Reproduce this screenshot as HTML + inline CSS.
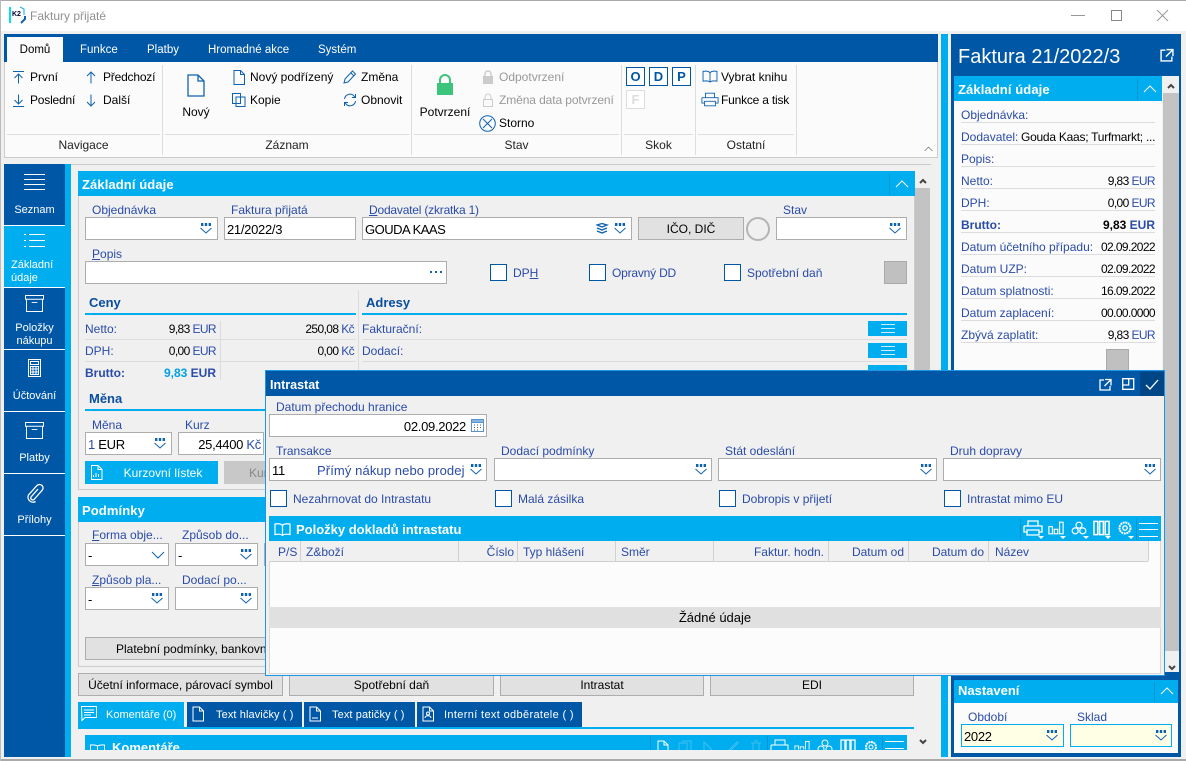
<!DOCTYPE html>
<html><head><meta charset="utf-8"><title>Faktury přijaté</title>
<style>
html,body{margin:0;padding:0;width:1186px;height:761px;overflow:hidden;background:#f0f0f0}
body{position:relative;font-family:"Liberation Sans","DejaVu Sans",sans-serif;font-size:12px;color:#000}
div,svg,span.a{position:absolute;box-sizing:border-box}
.t{white-space:nowrap;line-height:16px;height:16px}
.l{color:#2a4ba8}
.w{color:#fff}
.r{text-align:right}
.c{text-align:center}
.b{font-weight:bold}
.n{letter-spacing:-.6px}
.h{background:#00aeef;color:#fff;font-weight:bold;font-size:14px;line-height:27px;padding-left:4px;height:25px;letter-spacing:.1px}
.i{background:#fff;border:1px solid #adadad;height:23px;line-height:23px;padding-left:2px;white-space:nowrap;font-size:13px;letter-spacing:-.3px}
.btn{background:#e1e1e1;border:1px solid #adadad;height:23px;line-height:23px;text-align:center;white-space:nowrap;overflow:hidden}
.cb{width:17px;height:17px;border:1px solid #0057a6;background:#fff}
.line{background:#dcdcdc;height:1px}
.cy{background:#00aeef}
.bl{background:#0057a6}
svg{fill:none;stroke:#0f62b0;stroke-width:1}
svg.wh{stroke:#fff}
.col{top:541px;height:20px;width:1px;background:#d0d0d0}
.sk{width:19px;height:19px;border:1px solid #0057a6;color:#0057a6;font-weight:bold;font-size:13px;line-height:17px;text-align:center;background:#fff}
.sub{color:#0a4ea0;font-size:13px;font-weight:bold}
.tab{font-size:11.500px}
</style></head><body>
<svg width="0" height="0" style="display:none">
<symbol id="dd" viewBox="0 0 12 11"><rect x="1" y="0" width="2.4" height="3" fill="#0f62b0" stroke="none"/><rect x="4.8" y="0" width="2.4" height="3" fill="#0f62b0" stroke="none"/><rect x="8.6" y="0" width="2.4" height="3" fill="#0f62b0" stroke="none"/><path d="M.5 5l5.500 5 5.500-5"/></symbol>
<symbol id="up" viewBox="0 0 14 8"><path d="M1 7l6-6 6 6"/></symbol>
<symbol id="doc" viewBox="0 0 12 15"><path d="M1 .5h6.500l4 4v10H1zM7.500 .5v4h4"/></symbol>
<symbol id="box" viewBox="0 0 20 18"><path d="M.5.5h19v4H.5zM1.500 4.500v13h17v-13M7 8h6"/></symbol>
<symbol id="printer" viewBox="0 0 20 16"><path d="M5 6V1h10v5M1 6h18v6h-3M4 12H1V6M4 10h12v5H4z"/></symbol>
<symbol id="chart" viewBox="0 0 18 15"><path d="M1 6h4v8H1zM7 9h4v5H7zM13 1h4v13h-4z"/></symbol>
<symbol id="cubes" viewBox="0 0 17 15"><circle cx="8.500" cy="4" r="3.200"/><circle cx="4.500" cy="10" r="3.200"/><circle cx="12.500" cy="10" r="3.200"/></symbol>
<symbol id="cols" viewBox="0 0 18 16"><path d="M1 1h4v14H1zM7 1h4v14H7zM13 1h4v14h-4z"/></symbol>
<symbol id="gear" viewBox="0 0 16 16"><circle cx="8" cy="8" r="5.500" stroke-dasharray="2 .6" stroke-width="2"/><circle cx="8" cy="8" r="2.200"/></symbol>
<symbol id="book" viewBox="0 0 17 14"><path d="M8.500 3C7 1 4 1 1 1.500V12c3-.5 6-.5 7.500 1 1.500-1.500 4.500-1.500 7.500-1V1.500C13 1 10 1 8.500 3zM8.500 3v10"/></symbol>
<symbol id="ext" viewBox="0 0 13 13"><path d="M5 2H1v10h10V8M6 1.500h6v6M12 1.500L5.500 8"/></symbol>
</svg>

<!-- window -->
<div style="left:0;top:0;width:1186px;height:1px;background:#aaa"></div>
<div style="left:0;top:1px;width:1186px;height:30px;background:#fff"></div>
<div style="left:0;top:759px;width:1186px;height:2px;background:#aaa"></div>
<div style="left:0;top:0;width:1px;height:761px;background:#bbb"></div>
<div style="left:9px;top:7px;width:2px;height:16px;background:#00e0f0"></div>
<div class="t b" style="left:12px;top:10px;font-size:7px;line-height:9px;height:9px;color:#003">K2</div>
<svg style="left:20px;top:6px" width="6" height="18"><path d="M0 1l4 2v6" stroke="#00aeef"/><path d="M1 17l4-4v-3" stroke="#0f62b0" stroke-width="2"/></svg>
<div class="t" style="left:30px;top:8px;color:#909090;font-size:12px">Faktury přijaté</div>
<div style="left:1071px;top:15px;width:14px;height:1px;background:#999"></div>
<div style="left:1111px;top:10px;width:11px;height:11px;border:1px solid #888"></div>
<svg style="left:1156px;top:9px" width="13" height="13"><path d="M1 1l11 11M12 1L1 12" stroke="#999"/></svg>

<!-- ribbon -->
<div class="bl" style="left:4px;top:34px;width:934px;height:28px"></div>
<div style="left:7px;top:37px;width:56px;height:25px;background:#fbfbfb"></div>
<div class="t c tab" style="left:7px;top:42px;width:56px">Domů</div>
<div class="t w tab" style="left:80px;top:42px">Funkce</div>
<div class="t w tab" style="left:147px;top:42px">Platby</div>
<div class="t w tab" style="left:208px;top:42px">Hromadné akce</div>
<div class="t w tab" style="left:318px;top:42px">Systém</div>
<div style="left:4px;top:62px;width:934px;height:96px;background:#fbfbfb;border:1px solid #ccc;border-top:0"></div>
<div style="left:7px;top:134px;width:153px;height:1px;background:#ddd"></div>
<div style="left:165px;top:134px;width:244px;height:1px;background:#ddd"></div>
<div style="left:414px;top:134px;width:205px;height:1px;background:#ddd"></div>
<div style="left:624px;top:134px;width:69px;height:1px;background:#ddd"></div>
<div style="left:698px;top:134px;width:96px;height:1px;background:#ddd"></div>
<div style="left:162px;top:65px;width:1px;height:90px;background:#ddd"></div>
<div style="left:411px;top:65px;width:1px;height:90px;background:#ddd"></div>
<div style="left:621px;top:65px;width:1px;height:90px;background:#ddd"></div>
<div style="left:695px;top:65px;width:1px;height:90px;background:#ddd"></div>
<div style="left:796px;top:65px;width:1px;height:90px;background:#ddd"></div>
<div class="t c" style="left:7px;top:137px;width:153px;color:#222">Navigace</div>
<div class="t c" style="left:165px;top:137px;width:244px;color:#222">Záznam</div>
<div class="t c" style="left:414px;top:137px;width:205px;color:#222">Stav</div>
<div class="t c" style="left:624px;top:137px;width:69px;color:#222">Skok</div>
<div class="t c" style="left:698px;top:137px;width:96px;color:#222">Ostatní</div>
<svg style="left:13px;top:71px" width="12" height="13"><path d="M0 .5h11M5.500 12.500V3M1.500 7l4-4 4 4"/></svg>
<div class="t" style="left:30px;top:69px">První</div>
<svg style="left:13px;top:94px" width="12" height="13"><path d="M0 12.500h11M5.500 .5V10M1.500 6l4 4 4-4"/></svg>
<div class="t" style="left:30px;top:92px;letter-spacing:-.2px">Poslední</div>
<svg style="left:86px;top:71px" width="10" height="13"><path d="M5 12.500V1M1 5l4-4 4 4"/></svg>
<div class="t" style="left:103px;top:69px;letter-spacing:-.2px">Předchozí</div>
<svg style="left:86px;top:94px" width="10" height="13"><path d="M5 .5V12M1 8l4 4 4-4"/></svg>
<div class="t" style="left:103px;top:92px">Další</div>
<svg style="left:187px;top:74px;stroke-width:1.300" width="18" height="23"><path d="M1 1h10l6 6v15H1zM11 1v6h6"/></svg>
<div class="t c" style="left:166px;top:104px;width:60px">Nový</div>
<svg style="left:233px;top:70px" width="12" height="15"><use href="#doc"/></svg>
<div class="t" style="left:250px;top:69px">Nový podřízený</div>
<svg style="left:232px;top:93px" width="14" height="14"><path d="M.5.5h8v10h-8zM4 4h9v9.500H4z"/></svg>
<div class="t" style="left:250px;top:92px">Kopie</div>
<svg style="left:343px;top:70px" width="14" height="14"><path d="M1 13l1-4 7.500-8 3 3L5 12zM8 3l3 3"/></svg>
<div class="t" style="left:361px;top:69px">Změna</div>
<svg style="left:343px;top:93px" width="14" height="14"><path d="M1.500 6A5.500 5.500 0 0 1 11 3l1.500 1.500M12.500 1v3.500H9M12.500 8A5.500 5.500 0 0 1 3 11L1.500 9.500M1.500 13V9.500H5"/></svg>
<div class="t" style="left:361px;top:92px">Obnovit</div>
<svg style="left:436px;top:74px" width="18" height="22"><path d="M4 10V6a5 5 0 0 1 10 0v4" stroke="#3cc47c" stroke-width="2"/><rect x="1" y="9" width="16" height="12" fill="#3cc47c" stroke="none"/></svg>
<div class="t c" style="left:415px;top:104px;width:60px">Potvrzení</div>
<svg style="left:482px;top:70px" width="12" height="14"><path d="M3 7V4a3 3 0 0 1 6 0v3" stroke="#ccc" stroke-width="1.500"/><rect x="1" y="6" width="10" height="8" fill="#ccc" stroke="none"/></svg>
<div class="t" style="left:499px;top:69px;color:#999">Odpotvrzení</div>
<svg style="left:482px;top:93px" width="12" height="14"><path d="M3 7V4a3 3 0 0 1 6 0v3M1.500 6.500h9v7h-9z" stroke="#ccc"/></svg>
<div class="t" style="left:499px;top:92px;color:#999;letter-spacing:-.1px">Změna data potvrzení</div>
<svg style="left:479px;top:115px" width="17" height="17"><circle cx="8.500" cy="8.500" r="7.800"/><path d="M4 4l9 9M13 4l-9 9"/></svg>
<div class="t" style="left:499px;top:115px">Storno</div>
<div class="sk" style="left:626px;top:67px">O</div>
<div class="sk" style="left:649px;top:67px">D</div>
<div class="sk" style="left:672px;top:67px">P</div>
<div class="sk" style="left:626px;top:90px;border-color:#ddd;color:#ddd">F</div>
<svg style="left:702px;top:70px" width="16" height="13"><use href="#book"/></svg>
<div class="t" style="left:721px;top:69px">Vybrat knihu</div>
<svg style="left:701px;top:92px" width="18" height="15"><use href="#printer"/></svg>
<div class="t" style="left:721px;top:92px;letter-spacing:-.2px">Funkce a tisk</div>
<svg style="left:924px;top:146px;stroke:#555" width="9" height="6"><use href="#up"/></svg>

<!-- cyan strip & right panel -->
<div class="cy" style="left:941px;top:34px;width:7px;height:723px"></div>
<div class="bl" style="left:951px;top:34px;width:230px;height:723px"></div>
<div class="t w" style="left:958px;top:45px;font-size:20px;line-height:24px;height:24px">Faktura 21/2022/3</div>
<svg class="wh" style="left:1160px;top:48px;stroke-width:1.300" width="14" height="14"><use href="#ext"/></svg>
<div style="left:954px;top:76px;width:208px;height:604px;background:#fbfbfb"></div>
<div class="h" style="left:954px;top:76px;width:208px;font-size:13px">Základní údaje</div>
<div style="left:1137px;top:79px;width:1px;height:21px;background:#0a95d0"></div>
<svg class="wh" style="left:1143px;top:85px" width="14" height="8"><use href="#up"/></svg>
<div style="left:1162px;top:76px;width:17px;height:604px;background:#f0f0f0"></div>
<div style="left:1163px;top:93px;width:16px;height:558px;background:#c3c3c3"></div>
<svg style="left:1167px;top:83px;stroke:#444;stroke-width:2" width="8" height="6"><path d="M1 5l3-3 3 3"/></svg>

<div class="t l" style="left:961px;top:107px">Objednávka:</div><div class="line" style="left:961px;top:122px;width:194px"></div>
<div class="t l" style="left:961px;top:129px">Dodavatel:</div><div class="t" style="left:1021px;top:129px;width:134px;overflow:hidden;letter-spacing:-.25px">Gouda Kaas; Turfmarkt; ...</div><div class="line" style="left:961px;top:144px;width:194px"></div>
<div class="t l" style="left:961px;top:151px">Popis:</div><div class="line" style="left:961px;top:166px;width:194px"></div>
<div class="t l" style="left:961px;top:173px">Netto:</div><div class="t r n" style="left:1055px;top:173px;width:100px">9,83 <span class="l">EUR</span></div><div class="line" style="left:961px;top:188px;width:194px"></div>
<div class="t l" style="left:961px;top:195px">DPH:</div><div class="t r n" style="left:1055px;top:195px;width:100px">0,00 <span class="l">EUR</span></div><div class="line" style="left:961px;top:210px;width:194px"></div>
<div class="t l b" style="left:961px;top:217px">Brutto:</div><div class="t r b" style="left:1055px;top:217px;width:100px">9,83 <span class="l">EUR</span></div><div class="line" style="left:961px;top:232px;width:194px"></div>
<div class="t l" style="left:961px;top:239px">Datum účetního případu:</div><div class="t r n" style="left:1055px;top:239px;width:100px">02.09.2022</div><div class="line" style="left:961px;top:254px;width:194px"></div>
<div class="t l" style="left:961px;top:261px">Datum UZP:</div><div class="t r n" style="left:1055px;top:261px;width:100px">02.09.2022</div><div class="line" style="left:961px;top:276px;width:194px"></div>
<div class="t l" style="left:961px;top:283px">Datum splatnosti:</div><div class="t r n" style="left:1055px;top:283px;width:100px">16.09.2022</div><div class="line" style="left:961px;top:298px;width:194px"></div>
<div class="t l" style="left:961px;top:305px">Datum zaplacení:</div><div class="t r n" style="left:1055px;top:305px;width:100px">00.00.0000</div><div class="line" style="left:961px;top:320px;width:194px"></div>
<div class="t l" style="left:961px;top:327px">Zbývá zaplatit:</div><div class="t r n" style="left:1055px;top:327px;width:100px">9,83 <span class="l">EUR</span></div><div class="line" style="left:961px;top:342px;width:194px"></div>
<div style="left:1106px;top:349px;width:23px;height:23px;background:#c0c0c0;border:1px solid #aaa"></div>

<!-- Nastavení -->
<div class="bl" style="left:951px;top:672px;width:230px;height:10px"></div>
<div class="cy" style="left:954px;top:680px;width:224px;height:23px"></div>
<div class="t w b" style="left:958px;top:683px;font-size:13px">Nastavení</div>
<div style="left:1154px;top:682px;width:1px;height:20px;background:#0a95d0"></div>
<svg class="wh" style="left:1160px;top:687px" width="14" height="8"><use href="#up"/></svg>
<div style="left:954px;top:703px;width:224px;height:50px;background:#fbfbfb"></div>
<div class="t l" style="left:968px;top:709px">Období</div>
<div class="t l" style="left:1077px;top:709px">Sklad</div>
<div class="i" style="left:961px;top:724px;width:103px;background:#ffffe6;border-color:#00aeef">2022</div>
<div class="i" style="left:1070px;top:724px;width:102px;background:#ffffe6;border-color:#00aeef"></div>
<svg style="left:1046px;top:730px" width="12" height="11"><use href="#dd"/></svg>
<svg style="left:1155px;top:730px" width="12" height="11"><use href="#dd"/></svg>

<!-- sidebar -->
<div class="bl" style="left:4px;top:164px;width:61px;height:593px"></div>
<div class="cy" style="left:65px;top:164px;width:6px;height:593px"></div>
<div class="cy" style="left:4px;top:226px;width:61px;height:61px"></div>
<div style="left:4px;top:225px;width:61px;height:1px;background:#fff"></div>
<div style="left:4px;top:287px;width:61px;height:1px;background:#fff"></div>
<div style="left:4px;top:349px;width:61px;height:1px;background:#fff"></div>
<div style="left:4px;top:411px;width:61px;height:1px;background:#fff"></div>
<div style="left:4px;top:473px;width:61px;height:1px;background:#fff"></div>
<div style="left:4px;top:535px;width:61px;height:1px;background:#fff"></div>
<svg class="wh" style="left:24px;top:174px" width="21" height="17"><path d="M0 .5h21M0 5.500h21M0 10.500h21M0 15.500h21"/></svg>
<div class="t w c" style="left:4px;top:202px;width:61px;font-size:11px">Seznam</div>
<svg class="wh" style="left:24px;top:233px" width="21" height="15"><path d="M5 1.500h16M5 7.500h16M5 13.500h16M0 1.500h2M0 7.500h2M0 13.500h2"/></svg>
<div class="t w" style="left:11px;top:258px;font-size:11px;height:14px;line-height:14px">Základní</div>
<div class="t w" style="left:11px;top:271px;font-size:11px;height:14px;line-height:14px">údaje</div>
<svg class="wh" style="left:25px;top:295px" width="19" height="17"><use href="#box"/></svg>
<div class="t w c" style="left:4px;top:321px;width:61px;font-size:11px;height:14px;line-height:14px">Položky</div>
<div class="t w c" style="left:4px;top:334px;width:61px;font-size:11px;height:14px;line-height:14px">nákupu</div>
<svg class="wh" style="left:28px;top:359px" width="13" height="18"><path d="M.5.500h12v17H.5zM2.500 2.500h8v3h-8zM2.500 7.500h8v8h-8zM5 7.500v8M8 7.500v8M2.500 10h8M2.500 13h8"/></svg>
<div class="t w c" style="left:4px;top:388px;width:61px;font-size:11px">Účtování</div>
<svg class="wh" style="left:25px;top:422px" width="19" height="17"><use href="#box"/></svg>
<div class="t w c" style="left:4px;top:450px;width:61px;font-size:11px">Platby</div>
<svg class="wh" style="left:25px;top:483px;stroke-width:1.300" width="19" height="20"><path d="M13 6l-7 8a2 2 0 0 0 3 2.500l8-9a3.500 3.500 0 0 0-5-5l-8.500 9.500a5 5 0 0 0 7 6.500"/></svg>
<div class="t w c" style="left:4px;top:512px;width:61px;font-size:11px">Přílohy</div>

<!-- main -->
<div style="left:71px;top:164px;width:860px;height:1px;background:#ccc"></div>
<div style="left:78px;top:196px;width:837px;height:294px;border:1px solid #ccc;border-top:0"></div>
<div class="h" style="left:78px;top:171px;width:837px;font-size:13px">Základní údaje</div>
<div style="left:889px;top:174px;width:1px;height:21px;background:#0a95d0"></div>
<svg class="wh" style="left:895px;top:180px" width="14" height="8"><use href="#up"/></svg>
<div style="left:915px;top:188px;width:15px;height:480px;background:#c3c3c3"></div>
<svg style="left:919px;top:178px;stroke:#444;stroke-width:2" width="8" height="6"><path d="M1 5l3-3 3 3"/></svg>
<svg style="left:919px;top:739px;stroke:#444;stroke-width:2" width="8" height="6"><path d="M1 1l3 3 3-3"/></svg>

<div class="t l" style="left:92px;top:202px">Objednávka</div>
<div class="i" style="left:85px;top:217px;width:133px"></div>
<svg style="left:200px;top:223px" width="12" height="11"><use href="#dd"/></svg>
<div class="t l" style="left:231px;top:202px">Faktura přijatá</div>
<div class="i" style="left:224px;top:217px;width:132px">21/2022/3</div>
<div class="t l" style="left:369px;top:202px;letter-spacing:-.2px"><u>D</u>odavatel (zkratka 1)</div>
<div class="i" style="left:362px;top:217px;width:270px;letter-spacing:-.5px">GOUDA KAAS</div>
<svg style="left:596px;top:223px" width="13" height="13"><path d="M1 2l5-1.500 5 1.500-5 2zM1 5l5 2 5-2M1 8l5 2 5-2" stroke-width="1.300"/></svg>
<svg style="left:614px;top:223px" width="12" height="11"><use href="#dd"/></svg>
<div class="btn" style="left:638px;top:217px;width:106px">IČO, DIČ</div>
<div style="left:746px;top:217px;width:24px;height:24px;border:2px solid #b4b4b4;border-radius:50%"></div>
<div class="t l" style="left:783px;top:202px">Stav</div>
<div class="i" style="left:776px;top:217px;width:131px"></div>
<svg style="left:889px;top:223px" width="12" height="11"><use href="#dd"/></svg>

<div class="t l" style="left:92px;top:246px"><u>P</u>opis</div>
<div class="i" style="left:85px;top:261px;width:362px"></div>
<svg style="left:429px;top:270px;stroke:none;fill:#0f62b0" width="14" height="4"><rect x="1" y="1" width="2" height="2"/><rect x="6" y="1" width="2" height="2"/><rect x="11" y="1" width="2" height="2"/></svg>
<div class="cb" style="left:490px;top:264px"></div><div class="t l" style="left:513px;top:265px">DP<u>H</u></div>
<div class="cb" style="left:589px;top:264px"></div><div class="t l" style="left:612px;top:265px;letter-spacing:-.2px">Opravný DD</div>
<div class="cb" style="left:724px;top:264px"></div><div class="t l" style="left:747px;top:265px">Spotřební daň</div>
<div style="left:884px;top:261px;width:23px;height:23px;background:#c0c0c0;border:1px solid #aaa"></div>

<div class="t sub" style="left:89px;top:295px">Ceny</div>
<div class="cy" style="left:85px;top:313px;width:271px;height:2px"></div>
<div style="left:358px;top:290px;width:1px;height:90px;background:#dcdcdc"></div>
<div class="t sub" style="left:366px;top:295px">Adresy</div>
<div class="cy" style="left:362px;top:313px;width:545px;height:2px"></div>

<div class="t l" style="left:85px;top:321px">Netto:</div><div class="t r n" style="left:116px;top:321px;width:100px">9,83 <span class="l">EUR</span></div><div class="t r n" style="left:254px;top:321px;width:100px">250,08 <span class="l">Kč</span></div>
<div class="line" style="left:85px;top:339px;width:271px"></div>
<div class="t l" style="left:85px;top:343px">DPH:</div><div class="t r n" style="left:116px;top:343px;width:100px">0,00 <span class="l">EUR</span></div><div class="t r n" style="left:254px;top:343px;width:100px">0,00 <span class="l">Kč</span></div>
<div class="line" style="left:85px;top:361px;width:271px"></div>
<div class="t l b" style="left:85px;top:365px">Brutto:</div><div class="t r b" style="left:116px;top:365px;width:100px"><span style="color:#00a0e8">9,83</span> <span class="l">EUR</span></div>
<div style="left:220px;top:321px;width:1px;height:59px;background:#dcdcdc"></div>

<div class="t l" style="left:362px;top:321px">Fakturační:</div>
<div class="cy" style="left:868px;top:321px;width:39px;height:15px"></div>
<svg class="wh" style="left:881px;top:324px;stroke:#cceeff" width="14" height="9"><path d="M0 .5h14M0 4.500h14M0 8.500h14"/></svg>
<div class="line" style="left:362px;top:339px;width:545px"></div>
<div class="t l" style="left:362px;top:343px">Dodací:</div>
<div class="cy" style="left:868px;top:343px;width:39px;height:15px"></div>
<svg class="wh" style="left:881px;top:346px;stroke:#cceeff" width="14" height="9"><path d="M0 .5h14M0 4.500h14M0 8.500h14"/></svg>
<div class="line" style="left:362px;top:361px;width:545px"></div>
<div class="cy" style="left:868px;top:365px;width:39px;height:6px"></div>

<div class="t sub" style="left:89px;top:391px">Měna</div>
<div class="cy" style="left:85px;top:409px;width:180px;height:2px"></div>
<div class="t l" style="left:92px;top:417px">Měna</div>
<div class="i" style="left:85px;top:432px;width:87px"><span class="l">1</span> EUR</div>
<svg style="left:154px;top:438px" width="12" height="11"><use href="#dd"/></svg>
<div class="t l" style="left:185px;top:417px">Kurz</div>
<div class="i r" style="left:178px;top:432px;width:86px;padding-right:2px;padding-left:0">25,4400 <span class="l">Kč</span></div>
<div class="cy" style="left:85px;top:461px;width:133px;height:23px"></div>
<svg class="wh" style="left:90px;top:465px" width="13" height="15"><use href="#doc"/><path d="M3.500 12v-2M6 12V8M8.500 12v-3" stroke="#fff"/></svg>
<div class="t w c" style="left:108px;top:465px;width:110px">Kurzovní lístek</div>
<div style="left:224px;top:461px;width:45px;height:23px;background:#c8c8c8"></div>
<div class="t" style="left:249px;top:465px;color:#888">Kur</div>

<div style="left:78px;top:522px;width:837px;height:145px;border:1px solid #ccc;border-top:0"></div>
<div class="h" style="left:78px;top:497px;width:837px;font-size:13px">Podmínky</div>
<div class="t l" style="left:92px;top:527px"><u>F</u>orma obje...</div>
<div class="i" style="left:85px;top:543px;width:84px">-</div>
<svg style="left:151px;top:551px" width="14" height="8"><path d="M1 1l6 6 6-6"/></svg>
<div class="t l" style="left:182px;top:527px">Způsob do...</div>
<div class="i" style="left:175px;top:543px;width:83px">-</div>
<svg style="left:240px;top:549px" width="12" height="11"><use href="#dd"/></svg>
<div style="left:264px;top:543px;width:4px;height:23px;background:#fff;border:1px solid #adadad"></div>
<div class="t l" style="left:92px;top:572px"><u>Z</u>působ pla...</div>
<div class="i" style="left:85px;top:587px;width:84px">-</div>
<svg style="left:151px;top:593px" width="12" height="11"><use href="#dd"/></svg>
<div class="t l" style="left:182px;top:572px">Dodací po...</div>
<div class="i" style="left:175px;top:587px;width:83px"></div>
<svg style="left:240px;top:593px" width="12" height="11"><use href="#dd"/></svg>
<div class="btn" style="left:85px;top:637px;width:400px;text-align:left"><span style="padding-left:30px">Platební podmínky, bankovní spojení</span></div>

<div class="btn" style="left:78px;top:673px;width:205px">Účetní informace, párovací symbol</div>
<div class="btn" style="left:289px;top:673px;width:205px">Spotřební daň</div>
<div class="btn" style="left:500px;top:673px;width:204px">Intrastat</div>
<div class="btn" style="left:710px;top:673px;width:204px">EDI</div>

<div class="cy" style="left:78px;top:702px;width:106px;height:27px"></div>
<svg class="wh" style="left:81px;top:706px" width="17" height="16"><path d="M.5.500h15v11H4l-3 3zM3 4h10M3 6.500h10M3 9h7"/></svg>
<div class="t w" style="left:106px;top:707px;font-size:11px">Komentáře (0)</div>
<div class="bl" style="left:187px;top:702px;width:115px;height:25px"></div>
<svg class="wh" style="left:192px;top:706px" width="12" height="16"><use href="#doc"/></svg>
<div class="t w" style="left:216px;top:707px;font-size:11px;letter-spacing:.1px">Text hlavičky (&nbsp;)</div>
<div class="bl" style="left:304px;top:702px;width:111px;height:25px"></div>
<svg class="wh" style="left:309px;top:706px" width="12" height="16"><use href="#doc"/><path d="M3 12h6"/></svg>
<div class="t w" style="left:332px;top:707px;font-size:11px;letter-spacing:.1px">Text patičky (&nbsp;)</div>
<div class="bl" style="left:417px;top:702px;width:165px;height:25px"></div>
<svg class="wh" style="left:422px;top:706px" width="12" height="16"><use href="#doc"/><circle cx="6" cy="7.500" r="1.500"/><path d="M3 12c0-3 6-3 6 0"/></svg>
<div class="t w" style="left:444px;top:707px;font-size:11px;letter-spacing:.35px">Interní text odběratele (&nbsp;)</div>
<div class="cy" style="left:78px;top:727px;width:836px;height:2px"></div>

<div class="cy" style="left:85px;top:735px;width:822px;height:15px;overflow:hidden"></div>
<svg class="wh" style="left:90px;top:744px" width="15" height="6" viewBox="0 0 15 6"><path d="M.5 6V1c3-.5 5 0 7 1 2-1 4-1.500 7-1v5M7.500 2v4"/></svg>
<div style="left:112px;top:740px;width:80px;height:10px;overflow:hidden"><div class="t w b" style="left:0;top:0;font-size:13px;height:16px">Komentáře</div></div>
<div style="left:650px;top:736px;width:1px;height:14px;background:#0a95d0"></div>
<svg class="wh" style="left:657px;top:740px" width="12" height="10"><path d="M1 13V1h6l4 4v8M7 1v4h4"/></svg>
<svg style="left:678px;top:740px;stroke:#40bff0" width="14" height="10"><path d="M1 3h8v10M1 3v10M5 3V1h8v12"/></svg>
<svg style="left:703px;top:741px;stroke:#40bff0" width="11" height="9"><path d="M1 9V1l8 8"/></svg>
<svg style="left:727px;top:740px;stroke:#40bff0" width="13" height="10"><path d="M1 11l9-9 1 1-8 8"/></svg>
<svg style="left:750px;top:740px;stroke:#40bff0" width="12" height="10"><path d="M1 3h10M3 3v9M9 3v9M4 1h4"/></svg>
<div style="left:767px;top:736px;width:1px;height:14px;background:#0a95d0"></div>
<svg class="wh" style="left:770px;top:739px" width="19" height="11"><path d="M5 6V1h10v5M1 6h17v7M1 13V6"/></svg>
<svg class="wh" style="left:794px;top:740px" width="16" height="10" viewBox="0 0 18 10"><path d="M1 10V6h4v4M7 10V7h4v3M13 10V1h4v9"/></svg>
<svg class="wh" style="left:817px;top:739px" width="16" height="11" viewBox="0 0 16 11"><circle cx="8" cy="4" r="3"/><circle cx="4" cy="10" r="3"/><circle cx="12" cy="10" r="3"/></svg>
<svg class="wh" style="left:840px;top:739px;stroke-width:1.300" width="16" height="11" viewBox="0 0 16 11"><path d="M1 13V1h4v12M6 13V1h4v12M11 13V1h4v12"/></svg>
<svg class="wh" style="left:864px;top:740px" width="14" height="10"><circle cx="7" cy="7" r="5" stroke-dasharray="2 .6" stroke-width="2"/><circle cx="7" cy="7" r="2"/></svg>
<div style="left:882px;top:736px;width:1px;height:14px;background:#0a95d0"></div>
<svg class="wh" style="left:885px;top:740px" width="19" height="10"><path d="M0 1.500h19M0 8.500h19"/></svg>

<!-- dialog -->
<div style="left:265px;top:370px;width:900px;height:306px;background:#f0f0f0;border:1px solid #1e96e6"></div>
<div class="bl" style="left:266px;top:371px;width:898px;height:25px"></div>
<div class="t w b" style="left:270px;top:377px;font-size:12.500px">Intrastat</div>
<div style="left:1140px;top:372px;width:24px;height:24px;background:#004687"></div>
<svg class="wh" style="left:1099px;top:378px;stroke-width:1.300" width="13" height="13"><use href="#ext"/></svg>
<svg class="wh" style="left:1122px;top:378px;stroke-width:1.300" width="13" height="12"><path d="M.7.700h11v10.600H.7zM.7 7h6V.7"/></svg>
<svg class="wh" style="left:1145px;top:379px;stroke-width:1.300" width="14" height="11"><path d="M1 6l4 4 8-9"/></svg>

<div class="t l" style="left:276px;top:399px">Datum přechodu hranice</div>
<div class="i r" style="left:269px;top:414px;width:218px;padding-right:20px">02.09.2022</div>
<svg style="left:471px;top:418px" width="13" height="14"><path d="M.5 1.500h12v12H.5z" stroke="#5a94d0"/><path d="M.5 1.500h12v3H.5z" fill="#8ab4e0" stroke="#5a94d0"/><path d="M3 7h1M6 7h1M9 7h1M3 9.500h1M6 9.500h1M9 9.500h1M3 12h1M6 12h1" stroke="#555"/></svg>
<div class="t l" style="left:276px;top:443px">Transakce</div>
<div class="i" style="left:269px;top:458px;width:218px">11</div>
<div class="t l" style="left:317px;top:463px;font-size:13px;letter-spacing:.1px">Přímý nákup nebo prodej</div>
<svg style="left:470px;top:464px" width="12" height="11"><use href="#dd"/></svg>
<div class="t l" style="left:501px;top:443px">Dodací podmínky</div>
<div class="i" style="left:494px;top:458px;width:218px"></div>
<svg style="left:695px;top:464px" width="12" height="11"><use href="#dd"/></svg>
<div class="t l" style="left:725px;top:443px">Stát odeslání</div>
<div class="i" style="left:718px;top:458px;width:219px"></div>
<svg style="left:920px;top:464px" width="12" height="11"><use href="#dd"/></svg>
<div class="t l" style="left:950px;top:443px">Druh dopravy</div>
<div class="i" style="left:943px;top:458px;width:218px"></div>
<svg style="left:1144px;top:464px" width="12" height="11"><use href="#dd"/></svg>
<div class="cb" style="left:270px;top:490px"></div><div class="t l" style="left:293px;top:491px">Nezahrnovat do Intrastatu</div>
<div class="cb" style="left:495px;top:490px"></div><div class="t l" style="left:518px;top:491px">Malá zásilka</div>
<div class="cb" style="left:719px;top:490px"></div><div class="t l" style="left:742px;top:491px">Dobropis v přijetí</div>
<div class="cb" style="left:944px;top:490px"></div><div class="t l" style="left:967px;top:491px">Intrastat mimo EU</div>

<div class="cy" style="left:269px;top:516px;width:892px;height:25px"></div>
<svg class="wh" style="left:274px;top:522px;stroke-width:1.200" width="17" height="15"><use href="#book"/></svg>
<div class="t w b" style="left:296px;top:522px;font-size:13px">Položky dokladů intrastatu</div>
<div style="left:1020px;top:519px;width:1px;height:21px;background:#0a95d0"></div>
<svg class="wh" style="left:1023px;top:520px;stroke-width:1.300" width="20" height="16"><use href="#printer"/></svg>
<svg class="wh" style="left:1048px;top:521px;stroke-width:1.300" width="16" height="14"><use href="#chart"/></svg>
<svg class="wh" style="left:1071px;top:521px;stroke-width:1.300" width="16" height="15"><use href="#cubes"/></svg>
<svg class="wh" style="left:1093px;top:520px;stroke-width:1.600" width="17" height="16"><use href="#cols"/></svg>
<svg class="wh" style="left:1117px;top:520px;stroke-width:1.300" width="16" height="16"><use href="#gear"/></svg>
<svg style="left:1037px;top:536px;stroke:none;fill:#fff" width="100" height="4"><path d="M1 0h6l-3 3zM23 0h6l-3 3zM46 0h6l-3 3zM68 0h6l-3 3zM91 0h6l-3 3z"/></svg>
<div style="left:1136px;top:519px;width:1px;height:21px;background:#0a95d0"></div>
<svg class="wh" style="left:1139px;top:523px" width="19" height="14"><path d="M0 .5h19M0 6.500h19M0 13.500h19"/></svg>

<div style="left:269px;top:541px;width:892px;height:133px;background:#fcfcfc;border:1px solid #d8d8d8;border-top:0"></div>
<div style="left:269px;top:541px;width:879px;height:21px;background:#f0f0f0;border-bottom:1px solid #d0d0d0"></div>
<div class="col" style="left:300px"></div><div class="col" style="left:458px"></div><div class="col" style="left:517px"></div><div class="col" style="left:615px"></div><div class="col" style="left:713px"></div><div class="col" style="left:828px"></div><div class="col" style="left:908px"></div><div class="col" style="left:988px"></div><div class="col" style="left:1148px"></div>
<div class="t l" style="left:278px;top:544px">P/S</div>
<div class="t l" style="left:306px;top:544px">Z&amp;boží</div>
<div class="t l r" style="left:454px;top:544px;width:60px">Číslo</div>
<div class="t l" style="left:523px;top:544px">Typ hlášení</div>
<div class="t l" style="left:621px;top:544px">Směr</div>
<div class="t l r" style="left:724px;top:544px;width:100px">Faktur. hodn.</div>
<div class="t l r" style="left:824px;top:544px;width:80px">Datum od</div>
<div class="t l r" style="left:904px;top:544px;width:80px">Datum do</div>
<div class="t l" style="left:995px;top:544px">Název</div>
<div style="left:269px;top:607px;width:892px;height:21px;background:#e0e0e0"></div>
<div class="t c" style="left:269px;top:610px;width:892px;font-size:13px">Žádné údaje</div>

<!-- right scrollbar bottom (over dialog edge) -->
<svg style="left:1168px;top:665px;stroke:#444;stroke-width:2" width="8" height="6"><path d="M1 1l3 3 3-3"/></svg>
</body></html>
